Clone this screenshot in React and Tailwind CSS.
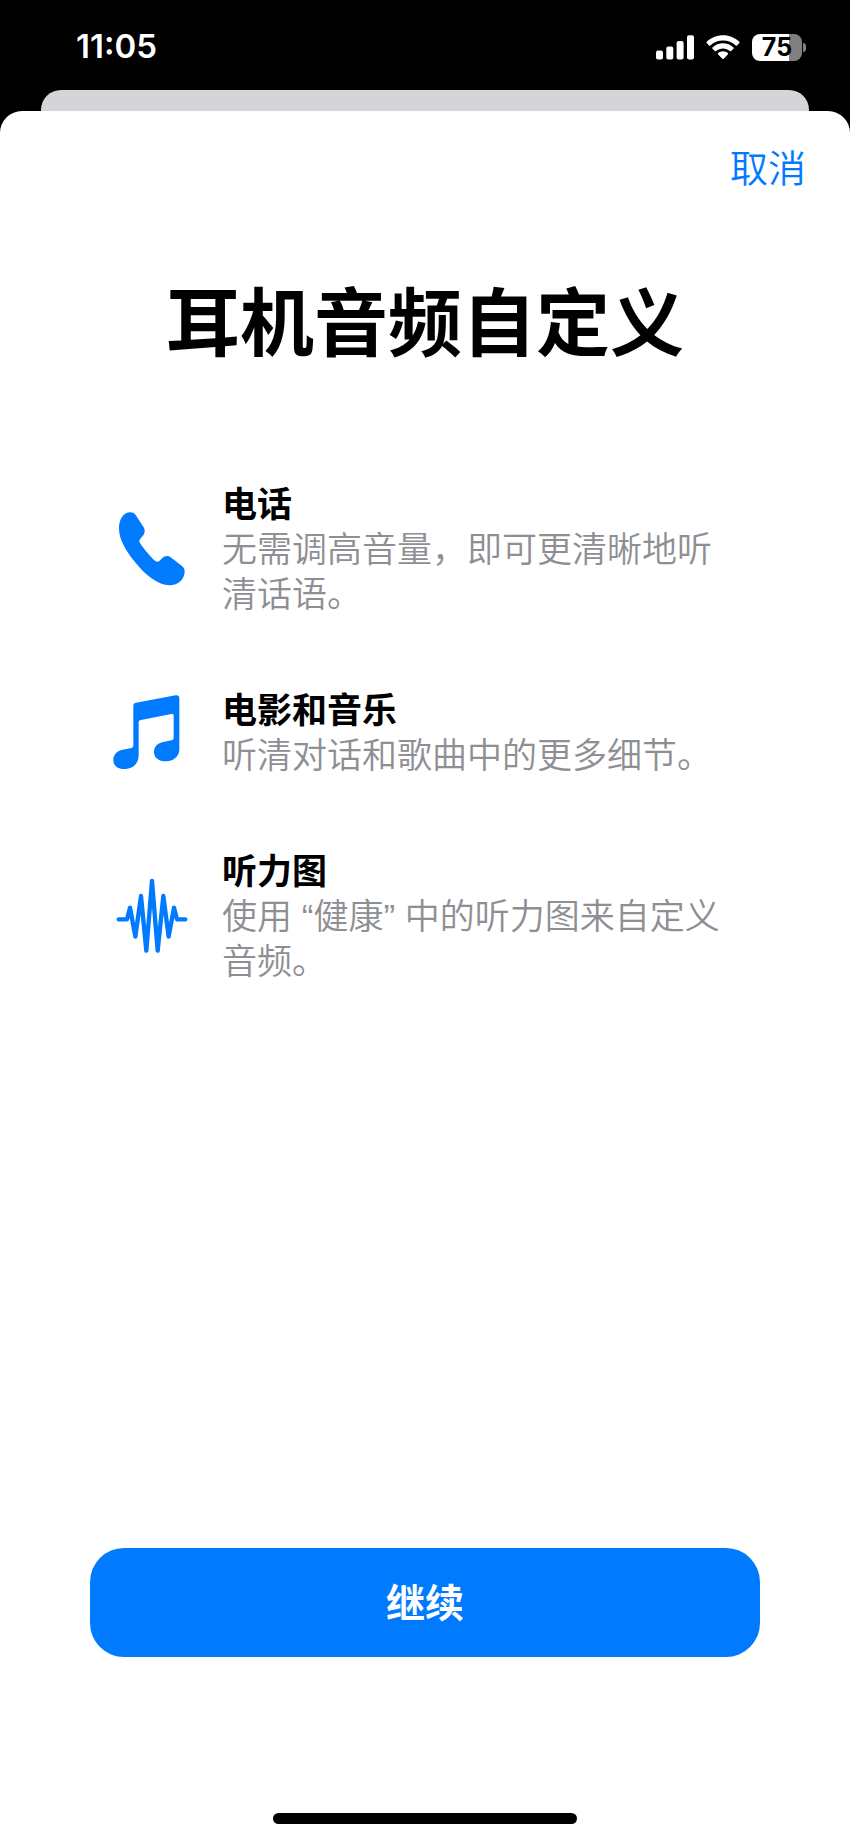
import React from 'react';

const PhoneIcon = () => (
    <svg viewBox="66 119 228 234" className="h-[78px] w-[76px] shrink-0 fill-[#007aff]" aria-hidden="true">
        <path d="M121 123C128 123 133 125 137 131L161 168C165 174 165 183 162 188C158 196 148 203 148 210C148 218 186 262 197 270C207 276 214 260 222 256C229 253 237 254 242 258L275 283C281 288 284 293 284 300C284 324 265 342 238 342C205 342 166 312 133 270C107 237 87 205 87 171C87 144 100 123 121 123Z" />
    </svg>
);

const MusicIcon = () => (
    <svg viewBox="66 69 228 234" className="h-[78px] w-[76px] shrink-0 fill-[#007aff]" aria-hidden="true">
        <path d="M138 95L257 73C264 72 268 75 268 82V235C268 257 250 271 227 271C206 271 192 260 192 243C192 227 203 216 220 213L244 208C249 207 251 204 251 200V134C251 130 249 128 244 129L153 147C148 148 146 150 146 154V252C146 278 129 294 102 294C83 294 70 284 70 267C70 251 81 239 98 236L121 232C128 231 130 228 130 222V105C130 99 132 96 138 95Z" />
    </svg>
);

const WaveIcon = () => (
    <svg
        viewBox="66 110 228 234"
        className="h-[78px] w-[76px] shrink-0 fill-none stroke-[#007aff]"
        strokeWidth="13"
        strokeLinecap="round"
        strokeLinejoin="round"
        aria-hidden="true"
    >
        <path d="M86 234H111L120 199L136 286L153 164L169 328L186 119L203 328L220 164L236 286L252 199L261 234H286" />
    </svg>
);

const features = [
    { icon: PhoneIcon, title: '电话', text: '无需调高音量，即可更清晰地听清话语。' },
    { icon: MusicIcon, title: '电影和音乐', text: '听清对话和歌曲中的更多细节。' },
    { icon: WaveIcon, title: '听力图', text: '使用 “健康” 中的听力图来自定义音频。' },
];

const StatusBar = () => (
    <div className="flex h-[90px] items-center justify-between pt-1 pr-11 pl-[76px] font-['Inter',sans-serif]">
        <span className="text-[33px] font-semibold text-white">11:05</span>
        <div className="flex items-center">
            <svg viewBox="0 0 38 25" className="mr-3 h-[25px] w-[38px] fill-white" aria-hidden="true">
                <rect x="0" y="15.5" width="7" height="9" rx="2" />
                <rect x="10.3" y="11.5" width="7" height="13" rx="2" />
                <rect x="20.6" y="6" width="7" height="18.5" rx="2" />
                <rect x="31" y="0.3" width="7" height="24.2" rx="2" />
            </svg>
            <svg viewBox="0 0 34 25" className="mr-3 h-[25px] w-[34px] fill-white" aria-hidden="true">
                <path d="M17 0.3C23.3 0.3 29 2.7 33.3 6.8C33.7 7.2 33.7 7.7 33.3 8.1L31 10.4C30.6 10.8 30.1 10.8 29.7 10.4C26.2 7.2 21.8 5.4 17 5.4C12.2 5.4 7.8 7.2 4.3 10.4C3.9 10.8 3.4 10.8 3 10.4L0.7 8.1C0.3 7.7 0.3 7.2 0.7 6.8C5 2.7 10.7 0.3 17 0.3Z" />
                <path d="M17 8.3C21.1 8.3 24.7 9.9 27.5 12.4C27.9 12.8 27.9 13.3 27.5 13.7L25.1 16C24.7 16.4 24.2 16.4 23.8 16C22 14.4 19.6 13.4 17 13.4C14.4 13.4 12 14.4 10.2 16C9.8 16.4 9.3 16.4 8.9 16L6.5 13.7C6.1 13.3 6.1 12.8 6.5 12.4C9.3 9.9 12.9 8.3 17 8.3Z" />
                <path d="M17 16.3C18.9 16.3 20.5 17 21.8 18.1C22.2 18.5 22.2 19 21.8 19.4L17.7 23.7C17.3 24.1 16.7 24.1 16.3 23.7L12.2 19.4C11.8 19 11.8 18.5 12.2 18.1C13.5 17 15.1 16.3 17 16.3Z" />
            </svg>
            <div className="flex h-[27px] w-[50px] items-center justify-center rounded-lg bg-linear-to-r from-white from-75% to-[#808080] to-75%">
                <span className="text-[25px] leading-[27px] font-bold text-black">75</span>
            </div>
            <div className="ml-px h-[9px] w-[3px] rounded-r-full bg-[#808080]" />
        </div>
    </div>
);

const App = () => {
    return (
        <div
            lang="zh-CN"
            className="flex min-h-screen flex-col bg-black font-['Liberation_Sans','Noto_Sans_CJK_SC',sans-serif]"
        >
            <StatusBar />

            {/* edge of the sheet underneath */}
            <div className="mx-[41px] h-[21px] rounded-t-[20px] bg-[#d4d4d9]" />

            <main className="flex flex-1 flex-col rounded-t-[22px] bg-white pb-4">
                <div className="flex justify-end pt-9 pr-11">
                    <button type="button" className="text-[38px] leading-[45px] font-[350] text-[#007aff]">
                        取消
                    </button>
                </div>

                <h1 className="mt-[88px] text-center text-[74px] leading-[90px] font-bold text-black">
                    耳机音频自定义
                </h1>

                <ul className="mt-28 flex flex-col gap-[71px] px-28">
                    {features.map(({ icon: Icon, title, text }) => (
                        <li key={title} className="flex items-center gap-[34px]">
                            <Icon />
                            <div className="text-[35px] leading-[45px]">
                                <h2 className="font-bold text-black">{title}</h2>
                                <p className="font-[350] text-[#8e8e93]">{text}</p>
                            </div>
                        </li>
                    ))}
                </ul>

                <div className="mt-auto px-[90px]">
                    <button
                        type="button"
                        className="h-[109px] w-full rounded-[34px] bg-[#007aff] pt-1 text-[39px] font-bold text-white"
                    >
                        继续
                    </button>
                </div>

                <div className="mx-auto mt-[156px] h-[11px] w-[304px] rounded-full bg-black" />
            </main>
        </div>
    );
};

export default App;
